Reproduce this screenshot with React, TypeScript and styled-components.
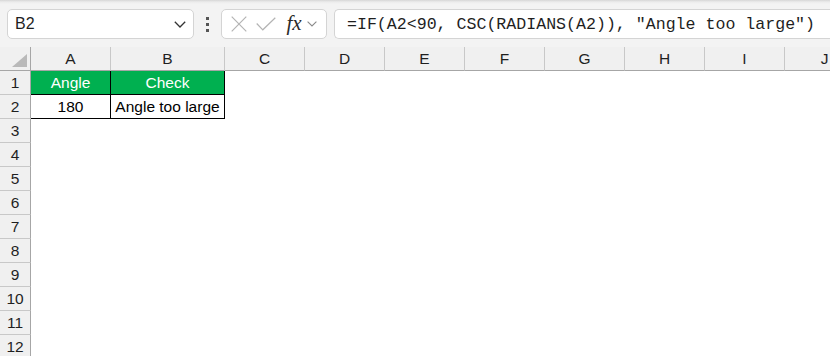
import React from "react";
import styled, { createGlobalStyle } from "styled-components";

const Global = createGlobalStyle`
  html, body { margin: 0; padding: 0; background: #ffffff; }
  body { width: 830px; height: 356px; overflow: hidden; font-family: "Liberation Sans", Arial, sans-serif; }
`;

const Page = styled.div`
  width: 830px;
  height: 356px;
  overflow: hidden;
  display: flex;
  flex-direction: column;
`;

const Toolbar = styled.div`
  height: 47px;
  flex: none;
  background: linear-gradient(#d6d6d6 0px, #ececec 2px, #f3f3f3 4px, #f3f3f3 100%);
  display: flex;
  align-items: flex-start;
  padding: 9px 0 0 7px;
  box-sizing: border-box;
`;

const Box = styled.div<{ $w: number; $open?: boolean }>`
  height: 30px;
  width: ${(p) => p.$w}px;
  flex: none;
  box-sizing: border-box;
  background: #ffffff;
  border: 1px solid #d4d4d4;
  border-radius: ${(p) => (p.$open ? "5px 0 0 5px" : "5px")};
  ${(p) => (p.$open ? "border-right: none;" : "")}
  display: flex;
  align-items: center;
`;

const NameText = styled.span`
  flex: 1;
  padding-left: 7px;
  font-family: "Liberation Sans", Arial, sans-serif;
  font-size: 16px;
  color: #1f1f1f;
`;

const Dots = styled.div`
  width: 27px;
  height: 30px;
  flex: none;
  display: flex;
  flex-direction: column;
  align-items: center;
  justify-content: center;
  gap: 3px;
`;

const Dot = styled.span`
  width: 3px;
  height: 3px;
  background: #555555;
`;

const IconSlot = styled.span<{ $w: number }>`
  width: ${(p) => p.$w}px;
  display: flex;
  justify-content: center;
  align-items: center;
  flex: none;
`;

const Fx = styled.span`
  font-family: "Liberation Serif", "Times New Roman", serif;
  font-style: italic;
  font-size: 21px;
  color: #2a2a2a;
  line-height: 1;
  margin-top: -2px;
`;

const Formula = styled.span`
  padding-left: 12px;
  font-family: "Liberation Mono", "Courier New", monospace;
  font-size: 16.6px;
  color: #1f1f1f;
  white-space: pre;
`;

const Grid = styled.div`
  display: grid;
  grid-template-columns: 31px 80px 114px repeat(8, 80px);
  grid-auto-rows: 24px;
  width: 865px;
`;

const Corner = styled.div`
  background: #f0f0f0;
  border-right: 1px solid #a6a6a6;
  border-bottom: 1px solid #a6a6a6;
  box-sizing: border-box;
  display: flex;
  align-items: flex-end;
  justify-content: flex-end;
  padding: 0 3px 3px 0;
`;

const ColHead = styled.div`
  background: #f0f0f0;
  border-right: 1px solid #c8c8c8;
  border-bottom: 1px solid #a6a6a6;
  box-sizing: border-box;
  display: flex;
  align-items: center;
  justify-content: center;
  font-family: "Liberation Sans", Arial, sans-serif;
  font-size: 15.5px;
  color: #1f1f1f;
  padding-top: 1px;
`;

const RowHead = styled.div`
  background: #f0f0f0;
  border-right: 1px solid #a6a6a6;
  border-bottom: 1px solid #c8c8c8;
  box-sizing: border-box;
  display: flex;
  align-items: center;
  justify-content: center;
  font-family: "Liberation Sans", Arial, sans-serif;
  font-size: 15.5px;
  color: #1f1f1f;
`;

const Cell = styled.div<{ $head?: boolean; $bordered?: boolean }>`
  background: ${(p) => (p.$head ? "#00b050" : "#ffffff")};
  color: ${(p) => (p.$head ? "#ffffff" : "#000000")};
  box-sizing: border-box;
  ${(p) => (p.$bordered ? "border-right: 1px solid #000; border-bottom: 1px solid #000;" : "")}
  display: flex;
  align-items: center;
  justify-content: center;
  font-family: "Liberation Sans", Arial, sans-serif;
  font-size: 15.5px;
  white-space: nowrap;
  overflow: visible;
`;

const cols = ["A", "B", "C", "D", "E", "F", "G", "H", "I", "J"];

const data: Record<string, { text: string; head?: boolean }> = {
  "1A": { text: "Angle", head: true },
  "1B": { text: "Check", head: true },
  "2A": { text: "180" },
  "2B": { text: "Angle too large" },
};

export default function App() {
  const rows = Array.from({ length: 12 }, (_, i) => i + 1);
  return (
    <Page>
      <Global />
      <Toolbar>
        <Box $w={187}>
          <NameText>B2</NameText>
          <IconSlot $w={26}>
            <svg width="12" height="7" viewBox="0 0 12 7">
              <path d="M0.8 0.8 L6 6 L11.2 0.8" fill="none" stroke="#333" strokeWidth="1.3" />
            </svg>
          </IconSlot>
        </Box>
        <Dots>
          <Dot />
          <Dot />
          <Dot />
        </Dots>
        <Box $w={106}>
          <IconSlot $w={28}>
            <svg width="16" height="16" viewBox="0 0 16 16" style={{ marginLeft: 6 }}>
              <path d="M0.7 0.7 L15.3 15.3 M15.3 0.7 L0.7 15.3" stroke="#b4b4b4" strokeWidth="1.2" fill="none" />
            </svg>
          </IconSlot>
          <IconSlot $w={32}>
            <svg width="20" height="14" viewBox="0 0 20 14">
              <path d="M0.7 6.5 L6.8 12.8 L19.3 0.7" stroke="#b4b4b4" strokeWidth="1.2" fill="none" />
            </svg>
          </IconSlot>
          <IconSlot $w={24}>
            <Fx>fx</Fx>
          </IconSlot>
          <IconSlot $w={12}>
            <svg width="10" height="6" viewBox="0 0 10 6">
              <path d="M0.6 0.6 L5 5 L9.4 0.6" fill="none" stroke="#8a8a8a" strokeWidth="1.1" />
            </svg>
          </IconSlot>
        </Box>
        <Box $w={520} $open style={{ marginLeft: 7 }}>
          <Formula>=IF(A2&lt;90, CSC(RADIANS(A2)), "Angle too large")</Formula>
        </Box>
      </Toolbar>
      <Grid>
        <Corner>
          <svg width="15" height="13" viewBox="0 0 15 13">
            <path d="M15 0 L15 13 L0 13 Z" fill="#b9b9b9" />
          </svg>
        </Corner>
        {cols.map((c) => (
          <ColHead key={c}>{c}</ColHead>
        ))}
        {rows.map((r) => (
          <React.Fragment key={r}>
            <RowHead>{r}</RowHead>
            {cols.map((c) => {
              const d = data[`${r}${c}`];
              return (
                <Cell key={c} $head={d?.head} $bordered={!!d}>
                  {d?.text}
                </Cell>
              );
            })}
          </React.Fragment>
        ))}
      </Grid>
    </Page>
  );
}
